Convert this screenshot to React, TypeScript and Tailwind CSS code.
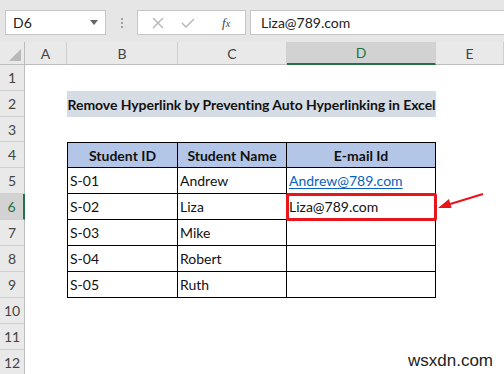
import { Fragment } from 'react';

const cols = ['A', 'B', 'C', 'D', 'E'];

const students = [
  { id: 'S-01', name: 'Andrew', email: 'Andrew@789.com', link: true },
  { id: 'S-02', name: 'Liza', email: 'Liza@789.com', link: false },
  { id: 'S-03', name: 'Mike', email: '', link: false },
  { id: 'S-04', name: 'Robert', email: '', link: false },
  { id: 'S-05', name: 'Ruth', email: '', link: false },
];

function RowHead({ n }: { n: number }) {
  const active = n === 6;
  return (
    <div
      className={
        'flex items-center justify-center border-b border-[#d0d0d0] text-[14px] ' +
        (active
          ? 'bg-[#d2d2d2] text-[#217346] border-r-2 border-r-[#217346]'
          : 'bg-[#e9e9e9] text-[#444] border-r border-r-[#bdbdbd]')
      }
    >
      {n}
    </div>
  );
}

function Blank() {
  return <div className="bg-white" />;
}

export default function App() {
  const rowH = ['h-[26px]', 'h-[26px]', 'h-[25px]', 'h-[26px]', 'h-[26px]', 'h-[26px]', 'h-[26px]', 'h-[26px]', 'h-[26px]', 'h-[26px]', 'h-[26px]', 'h-[26px]'];

  return (
    <div className="w-[504px] h-[374px] overflow-hidden bg-white font-['Lato','Liberation_Sans',sans-serif] text-[#111] relative">
      {/* formula bar */}
      <div className="h-[42px] bg-[#e6e6e6] flex items-start pt-[10px] pl-[5px]">
        <div className="w-[101px] h-[25px] bg-white border border-[#c6c6c6] flex items-center justify-between px-[7px] text-[14px] text-[#222]">
          <span>D6</span>
          <svg width="8" height="5" viewBox="0 0 8 5"><path d="M0 0h8L4 5z" fill="#666" /></svg>
        </div>
        <div className="w-[31px] h-[25px] flex flex-col items-center justify-center gap-[2px]">
          <span className="w-[2px] h-[2px] bg-[#a0a0a0]" />
          <span className="w-[2px] h-[2px] bg-[#a0a0a0]" />
          <span className="w-[2px] h-[2px] bg-[#a0a0a0]" />
        </div>
        <div className="w-[109px] h-[25px] bg-white border border-[#c6c6c6] flex items-center pl-[14px]">
          <svg width="12" height="12" viewBox="0 0 12 12"><path d="M1 1l10 10M11 1L1 11" stroke="#b4b4b4" strokeWidth="1.3" /></svg>
          <svg width="14" height="12" viewBox="0 0 14 12" className="ml-[17px]"><path d="M1 6l4 4 8-8" stroke="#b4b4b4" strokeWidth="1.4" fill="none" /></svg>
          <span className="ml-[27px] text-[13px] italic text-[#444] font-['Liberation_Serif',serif]">
            f<span className="text-[10px]">x</span>
          </span>
        </div>
        <div className="flex-1 ml-[4px] h-[25px] bg-white border border-[#c6c6c6] border-r-0 flex items-center pl-[10px] text-[14px] text-[#222]">
          Liza@789.com
        </div>
      </div>

      {/* grid */}
      <div className="grid grid-cols-[25px_42px_111px_109px_149px_1fr] grid-rows-[23px]">
        {/* column headers */}
        <div className="bg-[#e9e9e9] border-r border-b border-[#bdbdbd] flex items-end justify-end pr-[3px] pb-[3px]">
          <svg width="12" height="12" viewBox="0 0 12 12"><path d="M12 0V12H0z" fill="#b8b8b8" /></svg>
        </div>
        {cols.map((c) => (
          <div
            key={c}
            className={
              'flex items-center justify-center text-[14px] border-r border-[#d0d0d0] ' +
              (c === 'D'
                ? 'bg-[#d2d2d2] text-[#217346] border-b-2 border-b-[#217346]'
                : 'bg-[#e9e9e9] text-[#444] border-b border-b-[#bdbdbd]')
            }
          >
            {c}
          </div>
        ))}

        {rowH.map((h, i) => {
          const r = i + 1;
          return (
            <Fragment key={r}>
              <div className={h + ' flex'}>
                <div className="flex-1 grid">
                  <RowHead n={r} />
                </div>
              </div>
              {r === 2 ? (
                <>
                  <Blank />
                  <div className="col-span-3 bg-[#d6dce4] flex items-center justify-center text-[14px] font-bold whitespace-nowrap tracking-[-0.06px]">
                    Remove Hyperlink by Preventing Auto Hyperlinking in Excel
                  </div>
                  <Blank />
                </>
              ) : r === 4 ? (
                <>
                  <Blank />
                  <div className="bg-[#b4c6e7] border border-black flex items-center justify-center text-[14px] font-bold">Student ID</div>
                  <div className="bg-[#b4c6e7] border-y border-r border-black flex items-center justify-center text-[14px] font-bold">Student Name</div>
                  <div className="bg-[#b4c6e7] border-y border-r border-black flex items-center justify-center text-[14px] font-bold">E-mail Id</div>
                  <Blank />
                </>
              ) : r >= 5 && r <= 9 ? (
                <>
                  <Blank />
                  <div className="border-x border-b border-black flex items-end pl-[2px] pb-[2px] text-[14px]">{students[r - 5].id}</div>
                  <div className="border-r border-b border-black flex items-end pl-[2px] pb-[2px] text-[14px]">{students[r - 5].name}</div>
                  <div className="relative border-r border-b border-black flex items-end pl-[2px] pb-[2px] text-[14px]">
                    {students[r - 5].link ? (
                      <span className="text-[#0563c1] underline underline-offset-2">{students[r - 5].email}</span>
                    ) : (
                      <span>{students[r - 5].email}</span>
                    )}
                    {r === 6 && (
                      <div className="absolute left-[-1px] top-[-1px] w-[151px] h-[28px] border-[3px] border-[#e8151b] rounded-[2px]" />
                    )}
                  </div>
                  <div className="relative">
                    {r === 6 && (
                      <svg className="absolute left-[1px] top-[-2px]" width="48" height="20" viewBox="0 0 48 20">
                        <path d="M46 2L10 13" stroke="#e8151b" strokeWidth="2.2" fill="none" />
                        <path d="M1 16L12 7l2.5 9z" fill="#e8151b" />
                      </svg>
                    )}
                  </div>
                </>
              ) : (
                <>
                  <Blank />
                  <Blank />
                  <Blank />
                  <Blank />
                  <Blank />
                </>
              )}
            </Fragment>
          );
        })}
      </div>

      <div className="absolute right-[11px] bottom-[1px] text-[17px] text-[#222] font-['Liberation_Sans',sans-serif]">wsxdn.com</div>
    </div>
  );
}
